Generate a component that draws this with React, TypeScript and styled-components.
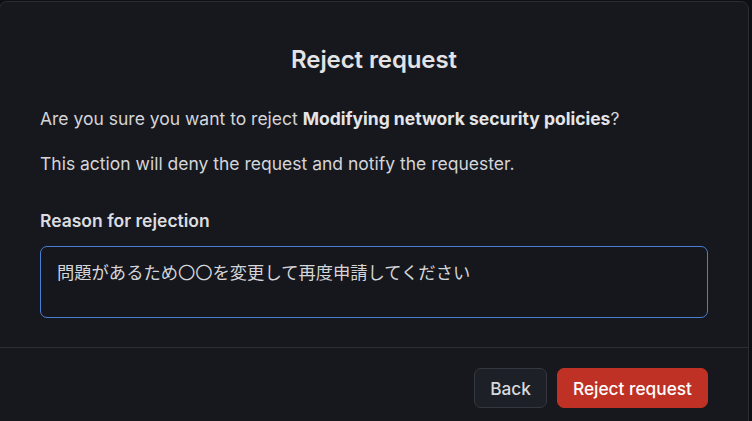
import React, { useEffect, useRef } from "react";
import styled, { createGlobalStyle } from "styled-components";

const Global = createGlobalStyle`
  html, body {
    margin: 0;
    padding: 0;
    background: #0e0f12;
    font-family: Inter, "Noto Sans CJK JP", sans-serif;
    -webkit-font-smoothing: antialiased;
  }
  body {
    padding-top: 1px;
    overflow: hidden;
  }
`;

const Dialog = styled.div`
  width: 750px;
  margin-left: -1px;
  height: 440px;
  box-sizing: border-box;
  background: #17181d;
  border: 1px solid #2a2c33;
  border-radius: 8px;
  display: flex;
  flex-direction: column;
  color: #d6d7db;
`;

const Header = styled.div`
  padding: 42px 40px 0;
  text-align: center;
`;

const Title = styled.h2`
  margin: 0;
  font-size: 24px;
  line-height: 32px;
  font-weight: 600;
  color: #e2e3e6;
  letter-spacing: -0.1px;
`;

const Body = styled.div`
  padding: 30px 40px 29px;
  display: flex;
  flex-direction: column;
`;

const Para = styled.p<{ $gap?: number }>`
  margin: 0 0 ${(p) => p.$gap ?? 0}px;
  font-size: 17.5px;
  line-height: 26px;
  color: #d4d5d9;
  strong {
    font-weight: 700;
    color: #e4e5e8;
  }
`;

const Label = styled.label`
  font-size: 17.5px;
  line-height: 26px;
  font-weight: 600;
  color: #dcdde0;
  margin-bottom: 12px;
`;

const Area = styled.textarea`
  box-sizing: border-box;
  width: 668px;
  height: 72px;
  resize: none;
  background: #16171c;
  border: 1px solid #4a7fd6;
  border-radius: 7px;
  padding: 14px 16px;
  font-family: Inter, "Noto Sans CJK JP", sans-serif;
  font-size: 17.3px;
  line-height: 24px;
  color: #d4d5d9;
  outline: none;
  caret-color: #e6e6e6;
`;

const Divider = styled.div`
  height: 1px;
  background: #2c2e35;
`;

const Footer = styled.div`
  padding: 20px 40px;
  display: flex;
  justify-content: flex-end;
  gap: 10px;
`;

const Button = styled.button<{ $danger?: boolean }>`
  height: 40px;
  padding: 0 15px;
  border-radius: 7px;
  font-family: Inter, sans-serif;
  font-size: 17.3px;
  font-weight: 500;
  cursor: pointer;
  background: ${(p) => (p.$danger ? "#bf3124" : "#1e2027")};
  color: ${(p) => (p.$danger ? "#ffffff" : "#d8d9dc")};
  border: 1px solid ${(p) => (p.$danger ? "#bf3124" : "#363841")};
`;

const TEXT = "問題があるため〇〇を変更して再度申請してください";

export default function App() {
  const ref = useRef<HTMLTextAreaElement>(null);
  useEffect(() => {
    const el = ref.current;
    if (el) {
      el.focus();
      el.setSelectionRange(TEXT.length, TEXT.length);
    }
  }, []);
  return (
    <>
      <Global />
      <Dialog>
        <Header>
          <Title>Reject request</Title>
        </Header>
        <Body>
          <Para $gap={19}>
            Are you sure you want to reject <strong>Modifying network security policies</strong>?
          </Para>
          <Para $gap={31}>This action will deny the request and notify the requester.</Para>
          <Label htmlFor="reason">Reason for rejection</Label>
          <Area id="reason" ref={ref} defaultValue={TEXT} />
        </Body>
        <Divider />
        <Footer>
          <Button>Back</Button>
          <Button $danger>Reject request</Button>
        </Footer>
      </Dialog>
    </>
  );
}
